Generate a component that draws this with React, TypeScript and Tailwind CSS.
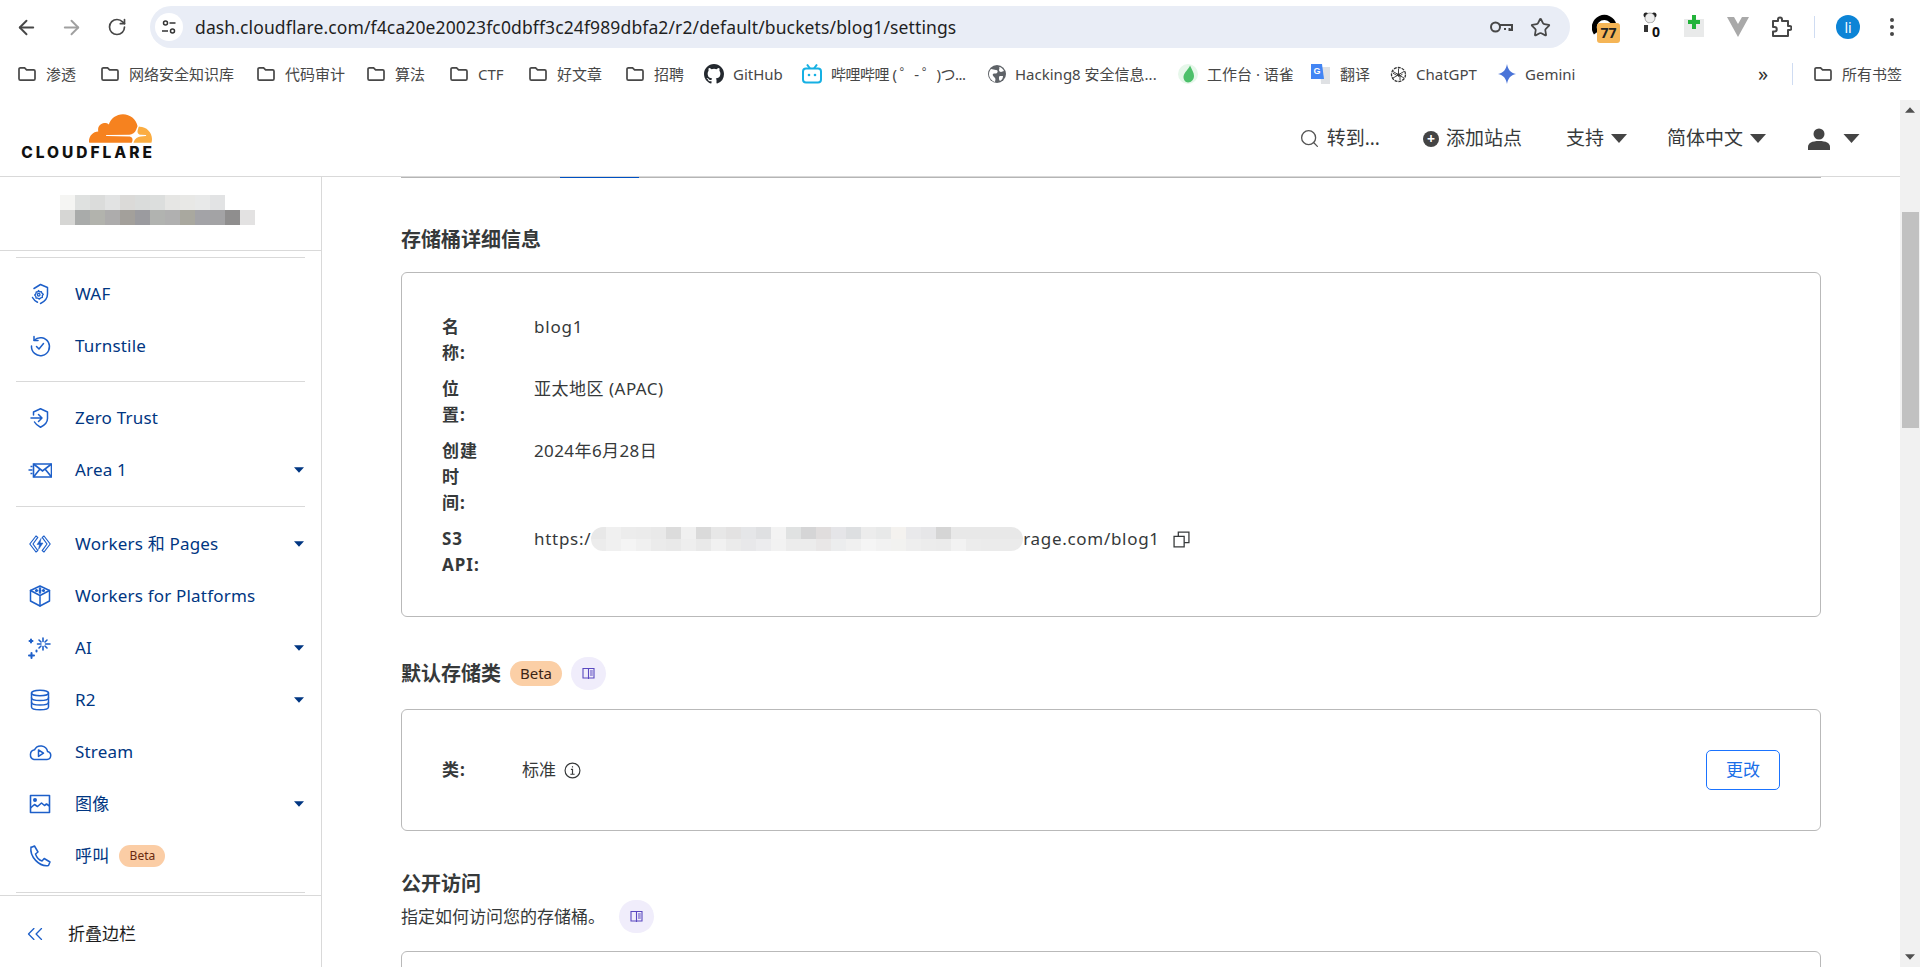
import React from "react";
import { ArrowLeft, ArrowRight, RotateCw, Star, Search, ChevronsLeft } from "lucide-react";

const Folder = () => (
  <svg width="20" height="20" viewBox="0 0 20 20" fill="none" stroke="#474747" strokeWidth="1.7" className="shrink-0">
    <path d="M2 5.2a1.4 1.4 0 0 1 1.4-1.4h4.2l2 2h7a1.4 1.4 0 0 1 1.4 1.4v7.6a1.4 1.4 0 0 1-1.4 1.4H3.4A1.4 1.4 0 0 1 2 14.8z" />
  </svg>
);

function BM({ icon, text, cls }: { icon: React.ReactNode; text: string; cls: string }) {
  return (
    <div className={"flex items-center gap-[9px] shrink-0 whitespace-nowrap " + cls}>
      {icon}
      <span>{text}</span>
    </div>
  );
}

const Caret = ({ cls }: { cls: string }) => (
  <svg viewBox="0 0 16 9" className={cls} fill="currentColor">
    <path d="M0 0h16L8 9z" />
  </svg>
);

const Book = () => (
  <svg width="13" height="13" viewBox="0 0 13 13" fill="none" stroke="#5a49c0" strokeWidth="1.1">
    <path d="M1 1.5h11v9.5H1z" />
    <path d="M6.5 1.5v10.5M8 4h2.8M8 6h2.8M8 8h2.8" />
  </svg>
);

const Circle = ({ cls }: { cls: string }) => (
  <span className={"flex h-[33px] w-[35px] shrink-0 items-center justify-center rounded-full bg-[#f0edfb] " + cls}>
    <Book />
  </span>
);

const ic = { width: 24, height: 24, viewBox: "0 0 24 24", fill: "none", stroke: "#1d5fc9", strokeWidth: 1.5, strokeLinecap: "round" as const, strokeLinejoin: "round" as const };

const icons: Record<string, React.ReactNode> = {
  waf: (
    <svg {...ic}>
      <path d="M6 6.500 12.500 2.500 19.500 5.500V12c0 4.500-3 7.600-7 9.500" />
      <path d="M4.500 15.500c1 2 2.500 3.500 5 4.700" />
      <path d="M10.500 8.500l1 1.300 1.800-.2.700 1.700 1.300 1-1 1.400.1 1.700-1.700.5-1.300 1.200-1.500-.9-1.800-.1-.3-1.800-1.100-1.300 1.200-1.300.3-1.700 1.700-.2z" strokeWidth="1.300" />
      <circle cx="10.700" cy="12.700" r="1.300" strokeWidth="1.300" />
    </svg>
  ),
  turnstile: (
    <svg {...ic}>
      <path d="M6.2 6.2A9 9 0 1 1 3.500 12" />
      <path d="M6 2.500v4h4" />
      <path d="m8.500 12.500 2.500 2.500 4.500-5.500" />
    </svg>
  ),
  zero: (
    <svg {...ic}>
      <path d="M5.500 9V6l7-3.200L19.500 6v6.500c0 4-3 6.800-7 8.700-2.800-1.300-4.800-3-6-5.200" />
      <path d="M3 12h11M10.500 8.500 14 12l-3.500 3.500" />
    </svg>
  ),
  area: (
    <svg width="24" height="24" viewBox="0 0 24 24" fill="none" stroke="#1d5fc9" strokeWidth="1.6">
      <path d="M5.500 6h18v13h-18z" />
      <path d="m5.500 6 9 7 9-7M5.500 19l6.500-8M23.500 19 17 11" />
      <path d="M2.500 8.500h2M0.500 12h4M2.500 15.500h2" />
    </svg>
  ),
  workers: (
    <svg {...ic}>
      <path d="M8 4 1.800 12 8 20l1.800-1.400L5 12l4.800-6.600zM16 4l6.200 8-6.200 8-1.800-1.400L19 12l-4.800-6.600z" strokeWidth="1.200" />
      <path d="M13 6.500 9 12.500h2.500L10.500 17.500 15 11h-2.700z" fill="#1d5fc9" strokeWidth="0.500" />
    </svg>
  ),
  wfp: (
    <svg {...ic}>
      <path d="m12 2 9.500 4.500v10.500L12 22l-9.500-5V6.500z" />
      <path d="M2.500 6.500 12 11.500l9.500-5M12 11.500V22" />
      <circle cx="12" cy="6.500" r="0.800" fill="#1d5fc9" />
      <circle cx="8.500" cy="6.500" r="0.800" fill="#1d5fc9" />
      <circle cx="15.500" cy="6.500" r="0.800" fill="#1d5fc9" />
      <circle cx="12" cy="4.500" r="0.500" fill="#1d5fc9" />
      <circle cx="12" cy="8.500" r="0.500" fill="#1d5fc9" />
    </svg>
  ),
  ai: (
    <svg width="24" height="24" viewBox="0 0 24 24" fill="none" stroke="#1d5fc9" strokeWidth="1.6" strokeLinecap="round">
      <path d="M15 2v3.500M15 10.500V14M9.500 8H13M17.500 8H22M11 4l2 2M19 4l-2 2M11 12l2-2M19 12l-2-2" />
      <path d="M3 3.500v3M1.500 5h3M3.500 17v5M1 19.500h5M8.500 14.500v1" strokeWidth="2" />
    </svg>
  ),
  r2: (
    <svg {...ic}>
      <ellipse cx="12" cy="5" rx="8.500" ry="2.800" />
      <path d="M3.500 5v14c0 1.700 3.800 2.800 8.500 2.800s8.500-1.100 8.500-2.800V5" />
      <path d="M3.500 9.700c0 1.700 3.800 2.800 8.500 2.800s8.500-1.100 8.500-2.800M3.500 14.300c0 1.700 3.800 2.800 8.500 2.800s8.500-1.100 8.500-2.800" />
    </svg>
  ),
  stream: (
    <svg {...ic}>
      <path d="M6 19.500h13a4 4 0 0 0 .6-7.900A7 7 0 0 0 6.500 9.800 5 5 0 0 0 6 19.500z" />
      <path d="m10.500 10 5 3.200-5 3.200z" />
    </svg>
  ),
  image: (
    <svg width="24" height="24" viewBox="0 0 24 24" fill="none" stroke="#1d5fc9" strokeWidth="1.600" strokeLinejoin="round">
      <path d="M2.500 3.500h19v17h-19z" />
      <path d="m2.500 16 4-3.500 3 2 4-3.500 3 2.500 2-1.500 3 2" />
      <circle cx="7" cy="8" r="1.200" fill="#1d5fc9" />
    </svg>
  ),
  call: (
    <svg {...ic}>
      <path d="M3 3.500 6.500 2l3.500 6-2.500 2c1 3 3.500 6 6.500 7l2.200-2.500 5.800 3.500-1.500 3.500c-9.500 1.500-19-9-17.500-18.500z" />
    </svg>
  ),
};

function Row({ id, label, caret, badge }: { id: string; label: string; caret?: boolean; badge?: boolean }) {
  return (
    <div className="flex h-[52px] items-center pl-[28px] pr-[17px]">
      <span className="flex w-[47px] shrink-0 items-center">{icons[id]}</span>
      <span className="whitespace-nowrap tracking-[0.2px]">{label}</span>
      {badge && (
        <span className="ml-[10px] flex h-[22px] w-[46px] items-center justify-center rounded-full bg-[#fbcda5] text-[12px] text-[#6a2a10]">
          Beta
        </span>
      )}
      {caret && <Caret cls="ml-auto h-[6px] w-[10px] text-[#003682]" />}
    </div>
  );
}

const Divider = () => <div className="mx-[16px] h-px bg-[#d9d9d9]" />;

const blur1 = ["bg-[#f5f5f3]", "bg-[#dfe1e0]", "bg-[#dbdcdb]", "bg-[#e2e3e3]", "bg-[#dbdad8]", "bg-[#dadcdb]", "bg-[#dcdedd]", "bg-[#e6e6e4]", "bg-[#e8e8e6]", "bg-[#e8e9e9]", "bg-[#e2e3e4]"];
const blur2 = ["bg-[#d6d6d4]", "bg-[#a9abaa]", "bg-[#b2b3ad]", "bg-[#adacac]", "bg-[#a3a09b]", "bg-[#9b9b9f]", "bg-[#b1b3b0]", "bg-[#b0b0b0]", "bg-[#a9a89f]", "bg-[#a3a3a7]", "bg-[#a3a3a5]", "bg-[#8f8e8e]", "bg-[#e3e2e2]"];
const blur3 = ["bg-[#e8e8e8]", "bg-[#f0f0f0]", "bg-[#ececec]", "bg-[#ebebeb]", "bg-[#e9e9e9]", "bg-[#dcdcdc]", "bg-[#f0f0f0]", "bg-[#dadada]", "bg-[#e7e7e7]", "bg-[#e3e2e2]", "bg-[#e5e6e8]", "bg-[#dfe0e2]", "bg-[#f3f3f3]", "bg-[#e0e2e2]", "bg-[#d5d5d6]", "bg-[#e0dddd]", "bg-[#e5e5e8]", "bg-[#dddfe1]", "bg-[#ececec]", "bg-[#e8e9e9]", "bg-[#f4f2ef]", "bg-[#e9e9eb]", "bg-[#e6e6e8]", "bg-[#d5d5d5]", "bg-[#e8e8e8]", "bg-[#e8e8e8]", "bg-[#e8e8e8]", "bg-[#e8e8e8]", "bg-[#e8e8e8]"];
const blur4 = ["bg-[#ececec]", "bg-[#f0f0f0]", "bg-[#f4f4f4]", "bg-[#f0f0f0]", "bg-[#ebebeb]", "bg-[#e9e9e9]", "bg-[#eeeeee]", "bg-[#e9e9e9]", "bg-[#f1f1f1]", "bg-[#ebebeb]", "bg-[#e8e8ea]", "bg-[#ececee]", "bg-[#f2f2f2]", "bg-[#ececec]", "bg-[#ececec]", "bg-[#e9e7e7]", "bg-[#ecedee]", "bg-[#f0f0f0]", "bg-[#f5f5f5]", "bg-[#f2f2f2]", "bg-[#f2f2f0]", "bg-[#eeeeee]", "bg-[#ececec]", "bg-[#ebebeb]", "bg-[#f2f2f2]", "bg-[#ececec]", "bg-[#ebebeb]", "bg-[#ebebeb]", "bg-[#ebebeb]"];

function Info({ a, b, tall }: { a: React.ReactNode; b: React.ReactNode; tall: string }) {
  return (
    <div className={"flex " + tall}>
      <div className="w-[92px] shrink-0 pr-[54px] font-bold tracking-[1px]">{a}</div>
      <div className="flex-1">{b}</div>
    </div>
  );
}

export default function App() {
  return (
    <div className="flex h-[967px] w-[1920px] flex-col overflow-hidden bg-white font-['Noto_Sans','Noto_Sans_CJK_SC',sans-serif] text-[17px] text-[#36393a]">
      {/* browser toolbar */}
      <div className="flex h-[52px] shrink-0 items-center pt-[2px] text-[#474747]">
        <div className="flex w-[150px] shrink-0 items-center pl-[15px]">
          <ArrowLeft size={23} strokeWidth={2} />
          <ArrowRight size={23} strokeWidth={2} className="ml-[22px] text-[#a0a0a0]" />
          <RotateCw size={20} strokeWidth={2} className="ml-[24px]" />
        </div>
        <div className="flex h-[42px] w-[1420px] shrink-0 items-center rounded-full bg-[#e9edf6] pl-[5px] pr-[19px]">
          <span className="flex h-[28px] w-[28px] items-center justify-center rounded-full bg-white">
            <svg width="16" height="16" viewBox="0 0 16 16" fill="none" stroke="#333" strokeWidth="1.500">
              <circle cx="4.500" cy="4" r="2" />
              <path d="M8.500 4h6M1 12h6" />
              <circle cx="11.500" cy="12" r="2" />
            </svg>
          </span>
          <span className="ml-[12px] whitespace-nowrap text-[17.5px] tracking-[0.12px] text-[#1f1f1f]">dash.cloudflare.com/f4ca20e20023fc0dbff3c24f989dbfa2/r2/default/buckets/blog1/settings</span>
          <svg width="24" height="16" viewBox="0 0 24 16" fill="none" stroke="#474747" strokeWidth="2" className="ml-auto mr-[17px]">
            <circle cx="6.500" cy="8" r="4.500" />
            <path d="M11 6h12v5h-2.500V9M16 9v2" />
          </svg>
          <Star size={21} strokeWidth={2} />
        </div>
        <div className="flex flex-1 items-center">
          <span className="relative ml-[21px] h-[32px] w-[32px]">
            <svg width="26" height="26" viewBox="0 0 26 26" fill="none" stroke="#000" strokeWidth="5" className="absolute left-[1px] top-[2px]">
              <path d="M4 20A10 10 0 1 1 22 12" />
            </svg>
            <span className="absolute left-[6px] top-[12px] flex h-[20px] w-[23px] items-center justify-center rounded-[3px] bg-[#f5b556] text-[14px] font-bold leading-none text-[#222]">77</span>
          </span>
          <span className="relative ml-[18px] h-[30px] w-[28px]">
            <svg width="14" height="22" viewBox="0 0 14 22" className="absolute left-[2px] top-0">
              <circle cx="3" cy="3" r="2.500" fill="#222" />
              <circle cx="11" cy="3" r="2.500" fill="#222" />
              <circle cx="7" cy="6" r="5" fill="#eee" stroke="#555" strokeWidth="0.500" />
              <path d="M1 13h8v7H1z" fill="#333" />
            </svg>
            <span className="absolute left-[7px] top-[11px] flex h-[18px] w-[16px] items-center justify-center rounded-[3px] bg-white text-[14px] font-bold leading-none text-[#111]">0</span>
          </span>
          <span className="relative ml-[15px] h-[24px] w-[24px]">
            <span className="absolute left-0 top-[4px] h-[18px] w-[20px] bg-[#e9eaea]" />
            <span className="absolute left-[8px] top-[0px] h-[14px] w-[4px] bg-[#22b33a]" />
            <span className="absolute left-[4px] top-[5px] h-[4px] w-[12px] bg-[#22b33a]" />
          </span>
          <svg width="22" height="20" viewBox="0 0 22 20" className="ml-[19px]">
            <path d="M0 0h7l4 7 4-7h7L11 20z" fill="#a9a9a9" />
          </svg>
          <svg width="22" height="22" viewBox="0 0 22 22" fill="none" stroke="#474747" strokeWidth="2" strokeLinejoin="round" className="ml-[21px]">
            <path d="M3 5h5V3.500a2 2 0 0 1 4 0V5h6v5h1.500a2 2 0 0 1 0 4H18v6H3v-4.500h1.500a2.200 2.200 0 0 0 0-4.500H3z" />
          </svg>
          <span className="ml-[22px] h-[22px] w-px bg-[#cfdcf2]" />
          <span className="ml-[21px] flex h-[24px] w-[24px] items-center justify-center rounded-full bg-[#0c84d6] text-[14px] text-white">li</span>
          <span className="ml-[30px] flex flex-col gap-[3px]">
            <span className="h-[4px] w-[4px] rounded-full bg-[#474747]" />
            <span className="h-[4px] w-[4px] rounded-full bg-[#474747]" />
            <span className="h-[4px] w-[4px] rounded-full bg-[#474747]" />
          </span>
        </div>
      </div>

      {/* bookmarks */}
      <div className="flex h-[48px] shrink-0 items-center pb-[4px] pl-[17px] text-[15px] text-[#474747]">
        <BM icon={<Folder />} text="渗透" cls="w-[83px]" />
        <BM icon={<Folder />} text="网络安全知识库" cls="w-[156px]" />
        <BM icon={<Folder />} text="代码审计" cls="w-[110px]" />
        <BM icon={<Folder />} text="算法" cls="w-[83px]" />
        <BM icon={<Folder />} text="CTF" cls="w-[79px]" />
        <BM icon={<Folder />} text="好文章" cls="w-[97px]" />
        <BM icon={<Folder />} text="招聘" cls="w-[79px]" />
        <BM
          cls="w-[98px]"
          text="GitHub"
          icon={
            <svg width="20" height="20" viewBox="0 0 16 16" fill="#24292f" className="shrink-0">
              <path d="M8 0C3.580 0 0 3.580 0 8c0 3.540 2.290 6.530 5.470 7.590.4.070.55-.17.55-.38 0-.19-.01-.82-.01-1.490-2.010.37-2.530-.49-2.690-.94-.09-.23-.48-.94-.82-1.130-.28-.15-.68-.52-.01-.53.63-.01 1.080.58 1.230.82.72 1.210 1.870.87 2.330.66.070-.52.280-.87.510-1.070-1.780-.2-3.640-.89-3.640-3.950 0-.87.310-1.590.820-2.150-.08-.2-.36-1.020.08-2.120 0 0 .670-.21 2.200.82a7.420 7.420 0 0 1 4 0c1.530-1.040 2.200-.82 2.200-.82.440 1.100.160 1.920.080 2.120.51.560.820 1.270.820 2.150 0 3.070-1.870 3.750-3.650 3.950.290.250.540.730.540 1.480 0 1.070-.01 1.930-.01 2.200 0 .210.150.460.550.380A8.010 8.010 0 0 0 16 8c0-4.420-3.580-8-8-8z" />
            </svg>
          }
        />
        <BM
          cls="w-[186px] tracking-[-0.5px]"
          text="哔哩哔哩 ( ゜- ゜)つ..."
          icon={
            <svg width="20" height="20" viewBox="0 0 20 20" fill="none" className="shrink-0">
              <rect x="1" y="4.500" width="18" height="14" rx="3" stroke="#16b0e3" strokeWidth="2" />
              <path d="M5 0.500 8 4.500M15 0.500 12 4.500" stroke="#16b0e3" strokeWidth="2" />
              <circle cx="7" cy="11" r="1.300" fill="#16b0e3" />
              <circle cx="13" cy="11" r="1.300" fill="#16b0e3" />
            </svg>
          }
        />
        <BM
          cls="w-[190px]"
          text="Hacking8 安全信息..."
          icon={
            <svg width="18" height="18" viewBox="0 0 18 18" className="shrink-0">
              <circle cx="9" cy="9" r="9" fill="#5f6368" />
              <path d="M3 4c2 0 3 1 5 1s2 2 1 3-3 0-4 1 1 3 2 4 0 3 0 4C4 16 1 13 1 9c0-2 1-4 2-5zM11 2c2 0 4 2 5 4l-3 1c-1 0-2-1-2-2s1-2 0-3zM12 11h3c0 2-1 4-3 5-1-1-1-2-1-3s0-2 1-2z" fill="#fff" />
            </svg>
          }
        />
        <BM
          cls="w-[133px]"
          text="工作台 · 语雀"
          icon={
            <svg width="20" height="22" viewBox="0 0 20 22" className="shrink-0">
              <circle cx="10" cy="11" r="10" fill="#e6f7ea" />
              <path d="M12 2.500c-1 3-6 7-6.500 11-.3 3 2 6 4.500 6 3.500 0 6-3 6-6.500s-2-6-4-10.500z" fill="#4cc06a" />
            </svg>
          }
        />
        <BM
          cls="w-[79px]"
          text="翻译"
          icon={
            <svg width="20" height="22" viewBox="0 0 20 22" className="shrink-0">
              <path d="M9 4h10v17H10z" fill="#dfe1e4" />
              <path d="M0 1h11l2 15H0z" fill="#4285f4" />
              <text x="2.500" y="11" fontSize="9" fontWeight="700" fill="#fff" fontFamily="Liberation Sans">G</text>
            </svg>
          }
        />
        <BM
          cls="w-[108px]"
          text="ChatGPT"
          icon={
            <svg width="17" height="17" viewBox="0 0 17 17" fill="none" stroke="#333" strokeWidth="1.300" className="shrink-0">
              <circle cx="8.500" cy="8.500" r="7" strokeDasharray="3 1" />
              <path d="M8.500 2.500v8l4-2.300M3 5.500l7 4 0 4.500M14 5.500l-7 4-4 -2.300M3 12l7-4M14 12l-7-4" strokeWidth="0.900" />
            </svg>
          }
        />
        <BM
          cls="w-[260px]"
          text="Gemini"
          icon={
            <svg width="18" height="20" viewBox="0 0 18 20" className="shrink-0">
              <path d="M9 0c1 5.500 3.500 9 9 10-5.500 1-8 4.500-9 10-1-5.500-3.500-9-9-10 5.500-1 8-4.500 9-10z" fill="#4a74d8" />
            </svg>
          }
        />
        <span className="w-[34px] shrink-0 text-[20px] leading-none text-[#333]">»</span>
        <span className="h-[22px] w-px shrink-0 bg-[#cfdcf2]" />
        <BM icon={<Folder />} text="所有书签" cls="ml-[20px]" />
      </div>

      <div className="flex min-h-0 flex-1">
        <div className="flex min-w-0 flex-1 flex-col">
          {/* header */}
          <div className="flex h-[77px] shrink-0 items-center border-b border-[#d9d9d9] pl-[20px] text-[19px]">
            <div className="-mt-[4px] flex w-[135px] flex-col items-end">
              <svg width="63" height="29" viewBox="0 6.500 24 11" className="mr-[3px]">
                <path fill="#f6821f" d="M16.509 16.845c.147-.507.09-.971-.155-1.316-.225-.316-.605-.499-1.062-.52l-8.659-.112a.156.156 0 0 1-.133-.072c-.028-.042-.035-.098-.021-.155.028-.084.112-.148.204-.156l8.736-.112c1.035-.049 2.160-.887 2.554-1.914l.499-1.301c.021-.056.029-.113.015-.168-.563-2.546-2.835-4.445-5.550-4.445-2.504 0-4.628 1.618-5.388 3.861-.492-.366-1.118-.562-1.794-.499-1.203.119-2.166 1.083-2.286 2.286-.028.31-.007.613.064.894C1.568 13.171 0 14.775 0 16.752c0 .175.014.352.035.527.014.083.084.148.169.148h15.981c.091 0 .176-.065.204-.155z" />
                <path fill="#fbad41" d="M19.266 11.281c-.077 0-.161 0-.238.011-.057 0-.106.042-.127.098l-.338 1.175c-.147.507-.092.971.154 1.316.226.316.606.498 1.063.52l1.843.113c.056 0 .106.026.133.07.028.043.035.107.021.156-.028.084-.113.149-.204.155l-1.921.112c-1.041.049-2.158.887-2.553 1.914l-.14.359c-.029.071.021.141.098.141h6.598c.077 0 .147-.049.169-.126.112-.408.176-.837.176-1.280 0-2.603-2.125-4.727-4.735-4.727" />
              </svg>
              <span className="mt-[4px] whitespace-nowrap font-['Inter',sans-serif] text-[15.5px] font-extrabold leading-[12px] tracking-[3px] text-[#111]">CLOUDFLARE</span>
            </div>
            <div className="ml-auto flex items-center pr-[40px] pt-[1px]">
              <Search size={21} strokeWidth={1.500} className="text-[#555]" />
              <span className="ml-[7px]">转到...</span>
              <span className="ml-[43px] flex h-[16px] w-[16px] items-center justify-center rounded-full bg-[#444] text-[14px] font-bold leading-none text-white">+</span>
              <span className="ml-[7px]">添加站点</span>
              <span className="ml-[44px]">支持</span>
              <Caret cls="ml-[7px] h-[9px] w-[16px] text-[#444]" />
              <span className="ml-[40px]">简体中文</span>
              <Caret cls="ml-[7px] h-[9px] w-[16px] text-[#444]" />
              <svg width="22" height="22" viewBox="0 0 22 22" fill="#444" className="ml-[42px]">
                <circle cx="11" cy="6" r="5.500" />
                <path d="M0 22v-3c0-4 4-6 11-6s11 2 11 6v3z" />
              </svg>
              <Caret cls="ml-[13px] h-[9px] w-[17px] text-[#444]" />
            </div>
          </div>

          <div className="flex min-h-0 flex-1">
            {/* sidebar */}
            <aside className="flex w-[322px] shrink-0 flex-col border-r border-[#d9d9d9] text-[#003682]">
              <div className="flex h-[74px] shrink-0 flex-col border-b border-[#d9d9d9] pl-[60px] pt-[18px]">
                <div className="flex">
                  {blur1.map((c, i) => (
                    <span key={i} className={"h-[15px] w-[15px] " + c} />
                  ))}
                </div>
                <div className="flex">
                  {blur2.map((c, i) => (
                    <span key={i} className={"h-[15px] w-[15px] " + c} />
                  ))}
                </div>
              </div>
              <div className="mt-[6px]">
                <Divider />
                <div className="pb-[9px] pt-[10px]">
                  <Row id="waf" label="WAF" />
                  <Row id="turnstile" label="Turnstile" />
                </div>
                <Divider />
                <div className="pb-[10px] pt-[10px]">
                  <Row id="zero" label="Zero Trust" />
                  <Row id="area" label="Area 1" caret />
                </div>
                <Divider />
                <div className="pb-[10px] pt-[11px]">
                  <Row id="workers" label="Workers 和 Pages" caret />
                  <Row id="wfp" label="Workers for Platforms" />
                  <Row id="ai" label="AI" caret />
                  <Row id="r2" label="R2" caret />
                  <Row id="stream" label="Stream" />
                  <Row id="image" label="图像" caret />
                  <Row id="call" label="呼叫" badge />
                </div>
                <Divider />
              </div>
              <div className="mt-[2px] flex flex-1 items-center border-t border-[#d9d9d9] pl-[22px] pt-[4px] text-[#1d1d1d]">
                <ChevronsLeft size={26} strokeWidth={1.200} className="text-[#1d5fc9]" />
                <span className="ml-[20px]">折叠边栏</span>
              </div>
            </aside>

            {/* main */}
            <main className="min-w-0 flex-1 px-[79px]">
              <div className="flex h-px bg-[#b5b5b5]">
                <span className="ml-[159px] h-px w-[79px] bg-[#0051c3]" />
              </div>
              <h2 className="mt-[48px] text-[20px] font-bold leading-[28px]">存储桶详细信息</h2>
              <div className="mt-[18px] rounded-[6px] border border-[#b9b9b9] pb-[38px] pl-[40px] pr-[40px] pt-[41px] leading-[26px]">
                <Info tall="mb-[10px]" a="名称:" b={<span className="tracking-[0.8px]">blog1</span>} />
                <Info tall="mb-[10px]" a="位置:" b={<span className="tracking-[0.5px]">亚太地区 (APAC)</span>} />
                <Info tall="mb-[10px]" a="创建时间:" b={<span className="tracking-[0.4px]">2024年6月28日</span>} />
                <Info
                  tall=""
                  a="S3 API:"
                  b={
                    <div className="flex items-center tracking-[0.7px]">
                      <span>https:/</span>
                      <span className="flex h-[24px] w-[432px] shrink-0 flex-col overflow-hidden rounded-full">
                        <span className="flex h-[12px]">
                          {blur3.map((c, i) => (
                            <span key={i} className={"h-[12px] w-[15px] shrink-0 " + c} />
                          ))}
                        </span>
                        <span className="flex h-[12px]">
                          {blur4.map((c, i) => (
                            <span key={i} className={"h-[12px] w-[15px] shrink-0 " + c} />
                          ))}
                        </span>
                      </span>
                      <span>rage.com/blog1</span>
                      <svg width="17" height="17" viewBox="0 0 16 16" fill="none" stroke="#36393a" strokeWidth="1.200" className="ml-[13px]">
                        <path d="M1 5h9.500v10H1z" />
                        <path d="M5 5V1h10v10h-4.500" />
                      </svg>
                    </div>
                  }
                />
              </div>

              <div className="mt-[40px] flex items-center">
                <h2 className="text-[20px] font-bold leading-[32px]">默认存储类</h2>
                <span className="ml-[9px] flex h-[25px] w-[52px] items-center justify-center rounded-full bg-[#fbcfa6] text-[15px] text-[#3c2415]">Beta</span>
                <Circle cls="ml-[9px]" />
              </div>
              <div className="mt-[19px] flex h-[122px] items-center rounded-[6px] border border-[#b9b9b9] pl-[40px] pr-[40px]">
                <span className="w-[80px] shrink-0 font-bold tracking-[1px]">类:</span>
                <span>标准</span>
                <svg width="17" height="17" viewBox="0 0 16 16" fill="none" stroke="#36393a" strokeWidth="1.100" className="ml-[8px]">
                  <circle cx="8" cy="8" r="7" />
                  <path d="M6.500 7H8v4.500M6 11.500h4M8 4v1.200" />
                </svg>
                <button className="ml-auto h-[40px] w-[74px] rounded-[5px] border border-[#1a73ff] text-[#1a6fe8]">更改</button>
              </div>

              <h2 className="mt-[39px] text-[20px] font-bold leading-[28px]">公开访问</h2>
              <div className="mt-[1px] flex h-[35px] items-center">
                <span>指定如何访问您的存储桶。</span>
                <Circle cls="ml-[14px]" />
              </div>
              <div className="mt-[17px] h-[40px] rounded-[6px] border border-[#b9b9b9]" />
            </main>
          </div>
        </div>

        {/* page scrollbar */}
        <div className="flex w-[20px] shrink-0 flex-col bg-[#f1f1f1]">
          <Caret cls="mx-auto mt-[7px] h-[6px] w-[10px] rotate-180 text-[#505050]" />
          <div className="ml-[2px] mt-[99px] h-[216px] w-[17px] bg-[#c1c1c1]" />
          <Caret cls="mx-auto mb-[7px] mt-auto h-[6px] w-[10px] text-[#505050]" />
        </div>
      </div>
    </div>
  );
}
